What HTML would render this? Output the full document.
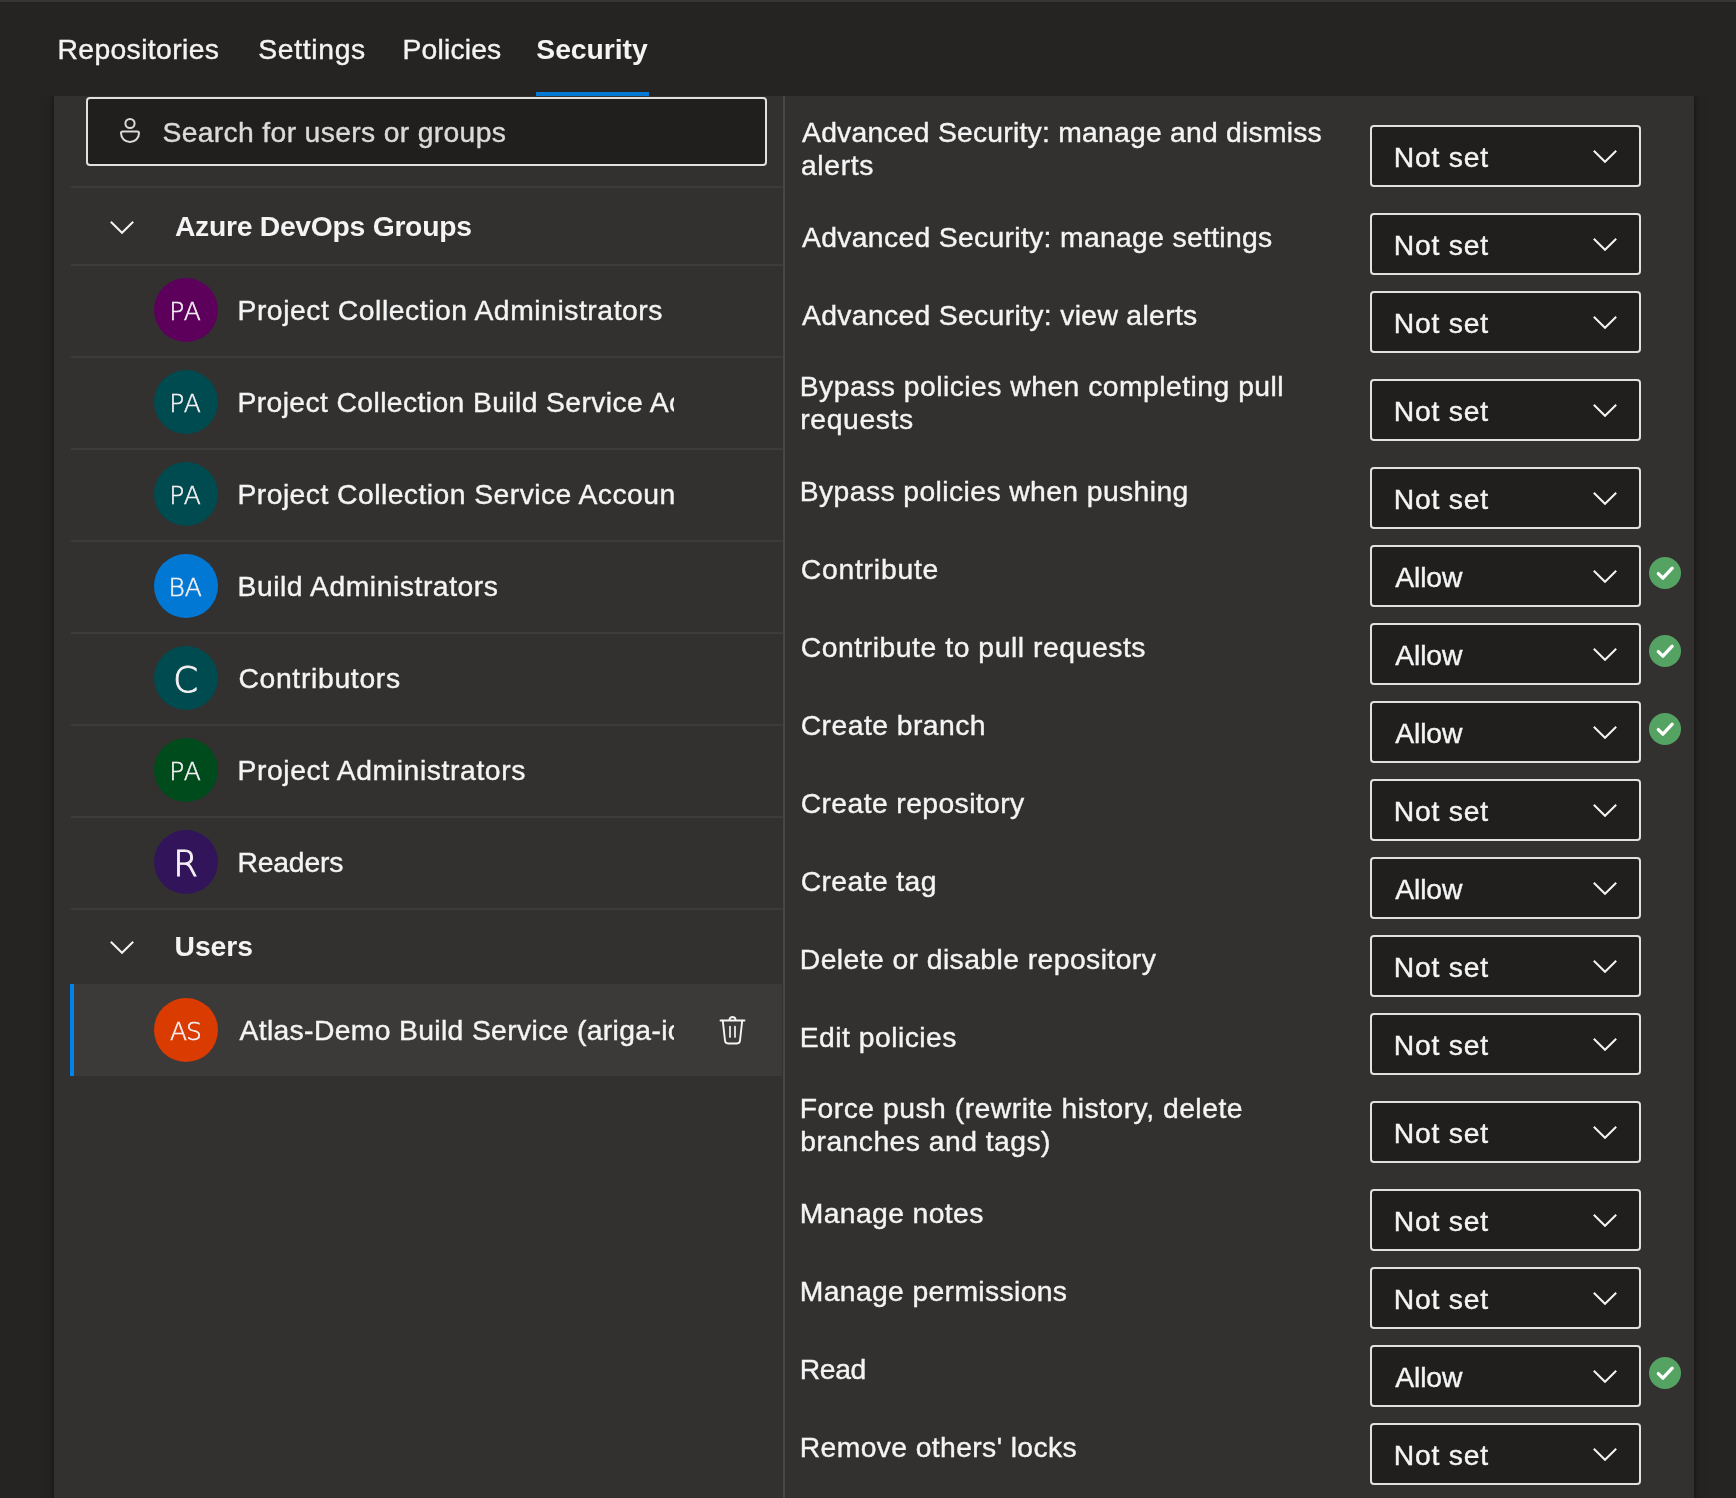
<!DOCTYPE html><html lang="en"><head><meta charset="utf-8"><title>Security</title><style>
*{box-sizing:border-box;margin:0;padding:0}
html,body{width:1736px;height:1498px;overflow:hidden;background:#252423}
body{font-family:"Liberation Sans",sans-serif;position:relative;color:#fff;-webkit-font-smoothing:antialiased}
.t{position:absolute;white-space:nowrap;-webkit-text-stroke:0.4px currentColor}
#root{position:absolute;left:0;top:0;width:1736px;height:1498px;overflow:hidden;will-change:transform;transform:translateZ(0)}
.abs{position:absolute}
.topstrip{left:0;top:0;width:1736px;height:2px;background:#383634}
.clip{left:0;top:96px;width:1736px;height:1402px;overflow:hidden}
.card{left:54px;top:0;width:1640px;height:1420px;background:#323130;box-shadow:0 0 3px 1px rgba(0,0,0,.28),0 0 13px 1px rgba(0,0,0,.22)}
.vdiv{left:783px;top:96px;width:2px;height:1402px;background:#484644}
.search{left:86px;top:97px;width:681px;height:69px;border:2px solid #e1e1e1;border-radius:4px;background:#201f1e}
.sep{left:71px;width:712px;height:2px;background:#3d3c3a}
.sel{left:70px;top:984px;width:712px;height:92px;background:#3b3a39}
.selbar{left:70px;top:984px;width:4px;height:92px;background:#0084ec}
.av{width:64px;height:64px;border-radius:50%;left:154px}
.avt{position:absolute;left:0;top:0;width:64px;height:64px;text-align:center;color:#f4f0f4;font-family:"DejaVu Sans","Liberation Sans",sans-serif;font-weight:200;-webkit-text-stroke:0.55px #f4f0f4}
.dd{left:1370px;width:271px;height:62px;border:2px solid #e1e1e1;border-radius:4px;background:#201f1e}
.underline{left:536px;top:92px;width:113px;height:4px;background:#0078d4}
svg{position:absolute;overflow:visible}
</style></head><body><div id="root">
<div class="abs topstrip"></div>
<div class="t " style="left:57.48px;top:33px;font-size:28.3px;line-height:32px;letter-spacing:0.377px;color:#f4f4f4;">Repositories</div>
<div class="t " style="left:258.33px;top:33px;font-size:28.3px;line-height:32px;letter-spacing:0.662px;color:#f4f4f4;">Settings</div>
<div class="t " style="left:402.58px;top:33px;font-size:28.3px;line-height:32px;letter-spacing:0.160px;color:#f4f4f4;">Policies</div>
<div class="t " style="left:536.31px;top:33px;font-size:28.3px;line-height:32px;letter-spacing:-0.035px;color:#f4f4f4;font-weight:700;-webkit-text-stroke-width:0;">Security</div>
<div class="abs clip"><div class="abs card"></div></div>
<div class="abs underline"></div>
<div class="abs vdiv"></div>
<div class="abs search"></div>
<svg style="left:119px;top:117px" width="22" height="27" viewBox="0 0 22 27" fill="none" stroke="#dadada" stroke-width="2"><circle cx="11" cy="6.5" r="4.6"/><path d="M3.6 14.5 H18.4 Q20 14.5 20 16.1 C20 21.5 16 25 11 25 C6 25 2 21.5 2 16.1 Q2 14.5 3.6 14.5 Z"/></svg>
<div class="t " style="left:162.53px;top:116px;font-size:28.3px;line-height:32px;letter-spacing:0.334px;color:#dadada;">Search for users or groups</div>
<div class="abs sep" style="top:186px"></div>
<div class="abs sep" style="top:264px"></div>
<div class="abs sep" style="top:356px"></div>
<div class="abs sep" style="top:448px"></div>
<div class="abs sep" style="top:540px"></div>
<div class="abs sep" style="top:632px"></div>
<div class="abs sep" style="top:724px"></div>
<div class="abs sep" style="top:816px"></div>
<div class="abs sep" style="top:908px"></div>
<div class="abs sel"></div><div class="abs selbar"></div>
<svg style="left:110.0px;top:220.5px" width="24" height="13" viewBox="0 0 24 13" fill="none" stroke="#f4f4f4" stroke-width="2.0"><path d="M0.8 0.8 L12.0 11.8 L23.2 0.8"/></svg>
<div class="t " style="left:174.92px;top:210px;font-size:28.3px;line-height:32px;letter-spacing:-0.273px;color:#f4f4f4;font-weight:700;-webkit-text-stroke-width:0;">Azure DevOps Groups</div>
<svg style="left:110.0px;top:940.5px" width="24" height="13" viewBox="0 0 24 13" fill="none" stroke="#f4f4f4" stroke-width="2.0"><path d="M0.8 0.8 L12.0 11.8 L23.2 0.8"/></svg>
<div class="t " style="left:174.50px;top:930px;font-size:28.3px;line-height:32px;letter-spacing:-0.033px;color:#f4f4f4;font-weight:700;-webkit-text-stroke-width:0;">Users</div>
<div class="abs av" style="top:278px;background:#5c005c"><div class="avt" style="font-size:25px;line-height:64px;top:1.5px;-webkit-text-stroke-width:0.55px;letter-spacing:1.0px;padding-left:1.0px;text-indent:0px;left:-1px">PA</div></div>
<div class="t " style="left:237.48px;top:294px;font-size:28.3px;line-height:32px;letter-spacing:0.552px;color:#f4f4f4;">Project Collection Administrators</div>
<div class="abs av" style="top:370px;background:#004b50"><div class="avt" style="font-size:25px;line-height:64px;top:1.5px;-webkit-text-stroke-width:0.55px;letter-spacing:1.0px;padding-left:1.0px;text-indent:0px;left:-1px">PA</div></div>
<div class="abs" style="left:230px;top:383px;width:444px;height:44px;overflow:hidden"><div class="t " style="left:7.48px;top:3px;font-size:28.3px;line-height:32px;letter-spacing:0.390px;color:#f4f4f4;">Project Collection Build Service Accounts</div></div>
<div class="abs av" style="top:462px;background:#004b50"><div class="avt" style="font-size:25px;line-height:64px;top:1.5px;-webkit-text-stroke-width:0.55px;letter-spacing:1.0px;padding-left:1.0px;text-indent:0px;left:-1px">PA</div></div>
<div class="abs" style="left:230px;top:475px;width:444px;height:44px;overflow:hidden"><div class="t " style="left:7.48px;top:3px;font-size:28.3px;line-height:32px;letter-spacing:0.458px;color:#f4f4f4;">Project Collection Service Accounts</div></div>
<div class="abs av" style="top:554px;background:#0078d4"><div class="avt" style="font-size:25px;line-height:64px;top:1.5px;-webkit-text-stroke-width:0.55px;letter-spacing:-0.2px;padding-left:0px;text-indent:0.2px;left:-1px">BA</div></div>
<div class="t " style="left:237.48px;top:570px;font-size:28.3px;line-height:32px;letter-spacing:0.550px;color:#f4f4f4;">Build Administrators</div>
<div class="abs av" style="top:646px;background:#004b50"><div class="avt" style="font-size:35.5px;line-height:64px;top:1.8px;-webkit-text-stroke-width:0.95px;letter-spacing:0px;padding-left:0px;text-indent:0px;left:-0.4px">C</div></div>
<div class="t " style="left:238.38px;top:662px;font-size:28.3px;line-height:32px;letter-spacing:0.690px;color:#f4f4f4;">Contributors</div>
<div class="abs av" style="top:738px;background:#004b1c"><div class="avt" style="font-size:25px;line-height:64px;top:1.5px;-webkit-text-stroke-width:0.55px;letter-spacing:1.0px;padding-left:1.0px;text-indent:0px;left:-1px">PA</div></div>
<div class="t " style="left:237.48px;top:754px;font-size:28.3px;line-height:32px;letter-spacing:0.605px;color:#f4f4f4;">Project Administrators</div>
<div class="abs av" style="top:830px;background:#32145a"><div class="avt" style="font-size:35.5px;line-height:64px;top:1.8px;-webkit-text-stroke-width:0.95px;letter-spacing:0px;padding-left:0px;text-indent:0px;left:-0.4px">R</div></div>
<div class="t " style="left:237.48px;top:846px;font-size:28.3px;line-height:32px;letter-spacing:-0.172px;color:#f4f4f4;">Readers</div>
<div class="abs av" style="top:998px;background:#da3b01"><div class="avt" style="font-size:25px;line-height:64px;top:1.5px;-webkit-text-stroke-width:0.55px;letter-spacing:-1.0px;padding-left:0px;text-indent:1.0px;left:-1px">AS</div></div>
<div class="abs" style="left:230px;top:1011px;width:444px;height:44px;overflow:hidden"><div class="t " style="left:9.44px;top:3px;font-size:28.3px;line-height:32px;letter-spacing:0.353px;color:#f4f4f4;">Atlas-Demo Build Service (ariga-io)</div></div>
<svg style="left:719px;top:1015px" width="27" height="30" viewBox="0 0 27 30" fill="none" stroke="#f4f4f4" stroke-width="1.9" stroke-linecap="round" stroke-linejoin="round"><path d="M1.5 5.5 H25.5"/><path d="M10.5 5 C10.5 1 16.5 1 16.5 5"/><path d="M3.8 5.8 L6 25.5 C6.2 27.5 7.5 28.5 9 28.5 H18 C19.5 28.5 20.8 27.5 21 25.5 L23.2 5.8"/><path d="M11 11.5 V22 M16 11.5 V22" stroke-width="1.7"/></svg>
<div class="t " style="left:802.04px;top:116px;font-size:28.3px;line-height:32px;letter-spacing:0.237px;color:#f4f4f4;">Advanced Security: manage and dismiss</div>
<div class="t " style="left:800.91px;top:149px;font-size:28.3px;line-height:32px;letter-spacing:0.661px;color:#f4f4f4;">alerts</div>
<div class="abs dd" style="top:125px"></div>
<div class="t " style="left:1393.78px;top:141px;font-size:28.3px;line-height:32px;letter-spacing:0.793px;color:#f4f4f4;">Not set</div>
<svg style="left:1593.0px;top:149.9px" width="24" height="13" viewBox="0 0 24 13" fill="none" stroke="#f4f4f4" stroke-width="2.0"><path d="M0.8 0.8 L12.0 11.8 L23.2 0.8"/></svg>
<div class="t " style="left:802.04px;top:221px;font-size:28.3px;line-height:32px;letter-spacing:0.331px;color:#f4f4f4;">Advanced Security: manage settings</div>
<div class="abs dd" style="top:213px"></div>
<div class="t " style="left:1393.78px;top:229px;font-size:28.3px;line-height:32px;letter-spacing:0.793px;color:#f4f4f4;">Not set</div>
<svg style="left:1593.0px;top:237.9px" width="24" height="13" viewBox="0 0 24 13" fill="none" stroke="#f4f4f4" stroke-width="2.0"><path d="M0.8 0.8 L12.0 11.8 L23.2 0.8"/></svg>
<div class="t " style="left:802.04px;top:299px;font-size:28.3px;line-height:32px;letter-spacing:0.342px;color:#f4f4f4;">Advanced Security: view alerts</div>
<div class="abs dd" style="top:291px"></div>
<div class="t " style="left:1393.78px;top:307px;font-size:28.3px;line-height:32px;letter-spacing:0.793px;color:#f4f4f4;">Not set</div>
<svg style="left:1593.0px;top:315.9px" width="24" height="13" viewBox="0 0 24 13" fill="none" stroke="#f4f4f4" stroke-width="2.0"><path d="M0.8 0.8 L12.0 11.8 L23.2 0.8"/></svg>
<div class="t " style="left:799.78px;top:370px;font-size:28.3px;line-height:32px;letter-spacing:0.477px;color:#f4f4f4;">Bypass policies when completing pull</div>
<div class="t " style="left:800.23px;top:403px;font-size:28.3px;line-height:32px;letter-spacing:0.635px;color:#f4f4f4;">requests</div>
<div class="abs dd" style="top:379px"></div>
<div class="t " style="left:1393.78px;top:395px;font-size:28.3px;line-height:32px;letter-spacing:0.793px;color:#f4f4f4;">Not set</div>
<svg style="left:1593.0px;top:403.9px" width="24" height="13" viewBox="0 0 24 13" fill="none" stroke="#f4f4f4" stroke-width="2.0"><path d="M0.8 0.8 L12.0 11.8 L23.2 0.8"/></svg>
<div class="t " style="left:799.78px;top:475px;font-size:28.3px;line-height:32px;letter-spacing:0.410px;color:#f4f4f4;">Bypass policies when pushing</div>
<div class="abs dd" style="top:467px"></div>
<div class="t " style="left:1393.78px;top:483px;font-size:28.3px;line-height:32px;letter-spacing:0.793px;color:#f4f4f4;">Not set</div>
<svg style="left:1593.0px;top:491.9px" width="24" height="13" viewBox="0 0 24 13" fill="none" stroke="#f4f4f4" stroke-width="2.0"><path d="M0.8 0.8 L12.0 11.8 L23.2 0.8"/></svg>
<div class="t " style="left:800.69px;top:553px;font-size:28.3px;line-height:32px;letter-spacing:0.788px;color:#f4f4f4;">Contribute</div>
<div class="abs dd" style="top:545px"></div>
<div class="t " style="left:1395.34px;top:561px;font-size:28.3px;line-height:32px;letter-spacing:-0.152px;color:#f4f4f4;">Allow</div>
<svg style="left:1593.0px;top:569.9px" width="24" height="13" viewBox="0 0 24 13" fill="none" stroke="#f4f4f4" stroke-width="2.0"><path d="M0.8 0.8 L12.0 11.8 L23.2 0.8"/></svg>
<svg style="left:1649px;top:557px" width="32" height="32" viewBox="0 0 32 32"><circle cx="16" cy="16" r="16" fill="#55a362"/><path d="M9.3 16.6 L13.9 21.2 L23.2 11.2" fill="none" stroke="#fff" stroke-width="3.3" stroke-linecap="round" stroke-linejoin="round"/></svg>
<div class="t " style="left:800.69px;top:631px;font-size:28.3px;line-height:32px;letter-spacing:0.557px;color:#f4f4f4;">Contribute to pull requests</div>
<div class="abs dd" style="top:623px"></div>
<div class="t " style="left:1395.34px;top:639px;font-size:28.3px;line-height:32px;letter-spacing:-0.152px;color:#f4f4f4;">Allow</div>
<svg style="left:1593.0px;top:647.9px" width="24" height="13" viewBox="0 0 24 13" fill="none" stroke="#f4f4f4" stroke-width="2.0"><path d="M0.8 0.8 L12.0 11.8 L23.2 0.8"/></svg>
<svg style="left:1649px;top:635px" width="32" height="32" viewBox="0 0 32 32"><circle cx="16" cy="16" r="16" fill="#55a362"/><path d="M9.3 16.6 L13.9 21.2 L23.2 11.2" fill="none" stroke="#fff" stroke-width="3.3" stroke-linecap="round" stroke-linejoin="round"/></svg>
<div class="t " style="left:800.69px;top:709px;font-size:28.3px;line-height:32px;letter-spacing:0.466px;color:#f4f4f4;">Create branch</div>
<div class="abs dd" style="top:701px"></div>
<div class="t " style="left:1395.34px;top:717px;font-size:28.3px;line-height:32px;letter-spacing:-0.152px;color:#f4f4f4;">Allow</div>
<svg style="left:1593.0px;top:725.9px" width="24" height="13" viewBox="0 0 24 13" fill="none" stroke="#f4f4f4" stroke-width="2.0"><path d="M0.8 0.8 L12.0 11.8 L23.2 0.8"/></svg>
<svg style="left:1649px;top:713px" width="32" height="32" viewBox="0 0 32 32"><circle cx="16" cy="16" r="16" fill="#55a362"/><path d="M9.3 16.6 L13.9 21.2 L23.2 11.2" fill="none" stroke="#fff" stroke-width="3.3" stroke-linecap="round" stroke-linejoin="round"/></svg>
<div class="t " style="left:800.69px;top:787px;font-size:28.3px;line-height:32px;letter-spacing:0.407px;color:#f4f4f4;">Create repository</div>
<div class="abs dd" style="top:779px"></div>
<div class="t " style="left:1393.78px;top:795px;font-size:28.3px;line-height:32px;letter-spacing:0.793px;color:#f4f4f4;">Not set</div>
<svg style="left:1593.0px;top:803.9px" width="24" height="13" viewBox="0 0 24 13" fill="none" stroke="#f4f4f4" stroke-width="2.0"><path d="M0.8 0.8 L12.0 11.8 L23.2 0.8"/></svg>
<div class="t " style="left:800.69px;top:865px;font-size:28.3px;line-height:32px;letter-spacing:0.409px;color:#f4f4f4;">Create tag</div>
<div class="abs dd" style="top:857px"></div>
<div class="t " style="left:1395.34px;top:873px;font-size:28.3px;line-height:32px;letter-spacing:-0.152px;color:#f4f4f4;">Allow</div>
<svg style="left:1593.0px;top:881.9px" width="24" height="13" viewBox="0 0 24 13" fill="none" stroke="#f4f4f4" stroke-width="2.0"><path d="M0.8 0.8 L12.0 11.8 L23.2 0.8"/></svg>
<div class="t " style="left:799.78px;top:943px;font-size:28.3px;line-height:32px;letter-spacing:0.429px;color:#f4f4f4;">Delete or disable repository</div>
<div class="abs dd" style="top:935px"></div>
<div class="t " style="left:1393.78px;top:951px;font-size:28.3px;line-height:32px;letter-spacing:0.793px;color:#f4f4f4;">Not set</div>
<svg style="left:1593.0px;top:959.9px" width="24" height="13" viewBox="0 0 24 13" fill="none" stroke="#f4f4f4" stroke-width="2.0"><path d="M0.8 0.8 L12.0 11.8 L23.2 0.8"/></svg>
<div class="t " style="left:799.78px;top:1021px;font-size:28.3px;line-height:32px;letter-spacing:0.469px;color:#f4f4f4;">Edit policies</div>
<div class="abs dd" style="top:1013px"></div>
<div class="t " style="left:1393.78px;top:1029px;font-size:28.3px;line-height:32px;letter-spacing:0.793px;color:#f4f4f4;">Not set</div>
<svg style="left:1593.0px;top:1037.9px" width="24" height="13" viewBox="0 0 24 13" fill="none" stroke="#f4f4f4" stroke-width="2.0"><path d="M0.8 0.8 L12.0 11.8 L23.2 0.8"/></svg>
<div class="t " style="left:799.78px;top:1092px;font-size:28.3px;line-height:32px;letter-spacing:0.502px;color:#f4f4f4;">Force push (rewrite history, delete</div>
<div class="t " style="left:800.29px;top:1125px;font-size:28.3px;line-height:32px;letter-spacing:0.470px;color:#f4f4f4;">branches and tags)</div>
<div class="abs dd" style="top:1101px"></div>
<div class="t " style="left:1393.78px;top:1117px;font-size:28.3px;line-height:32px;letter-spacing:0.793px;color:#f4f4f4;">Not set</div>
<svg style="left:1593.0px;top:1125.9px" width="24" height="13" viewBox="0 0 24 13" fill="none" stroke="#f4f4f4" stroke-width="2.0"><path d="M0.8 0.8 L12.0 11.8 L23.2 0.8"/></svg>
<div class="t " style="left:799.78px;top:1197px;font-size:28.3px;line-height:32px;letter-spacing:0.389px;color:#f4f4f4;">Manage notes</div>
<div class="abs dd" style="top:1189px"></div>
<div class="t " style="left:1393.78px;top:1205px;font-size:28.3px;line-height:32px;letter-spacing:0.793px;color:#f4f4f4;">Not set</div>
<svg style="left:1593.0px;top:1213.9px" width="24" height="13" viewBox="0 0 24 13" fill="none" stroke="#f4f4f4" stroke-width="2.0"><path d="M0.8 0.8 L12.0 11.8 L23.2 0.8"/></svg>
<div class="t " style="left:799.78px;top:1275px;font-size:28.3px;line-height:32px;letter-spacing:0.360px;color:#f4f4f4;">Manage permissions</div>
<div class="abs dd" style="top:1267px"></div>
<div class="t " style="left:1393.78px;top:1283px;font-size:28.3px;line-height:32px;letter-spacing:0.793px;color:#f4f4f4;">Not set</div>
<svg style="left:1593.0px;top:1291.9px" width="24" height="13" viewBox="0 0 24 13" fill="none" stroke="#f4f4f4" stroke-width="2.0"><path d="M0.8 0.8 L12.0 11.8 L23.2 0.8"/></svg>
<div class="t " style="left:799.78px;top:1353px;font-size:28.3px;line-height:32px;letter-spacing:-0.373px;color:#f4f4f4;">Read</div>
<div class="abs dd" style="top:1345px"></div>
<div class="t " style="left:1395.34px;top:1361px;font-size:28.3px;line-height:32px;letter-spacing:-0.152px;color:#f4f4f4;">Allow</div>
<svg style="left:1593.0px;top:1369.9px" width="24" height="13" viewBox="0 0 24 13" fill="none" stroke="#f4f4f4" stroke-width="2.0"><path d="M0.8 0.8 L12.0 11.8 L23.2 0.8"/></svg>
<svg style="left:1649px;top:1357px" width="32" height="32" viewBox="0 0 32 32"><circle cx="16" cy="16" r="16" fill="#55a362"/><path d="M9.3 16.6 L13.9 21.2 L23.2 11.2" fill="none" stroke="#fff" stroke-width="3.3" stroke-linecap="round" stroke-linejoin="round"/></svg>
<div class="t " style="left:799.78px;top:1431px;font-size:28.3px;line-height:32px;letter-spacing:0.384px;color:#f4f4f4;">Remove others' locks</div>
<div class="abs dd" style="top:1423px"></div>
<div class="t " style="left:1393.78px;top:1439px;font-size:28.3px;line-height:32px;letter-spacing:0.793px;color:#f4f4f4;">Not set</div>
<svg style="left:1593.0px;top:1447.9px" width="24" height="13" viewBox="0 0 24 13" fill="none" stroke="#f4f4f4" stroke-width="2.0"><path d="M0.8 0.8 L12.0 11.8 L23.2 0.8"/></svg>
</div></body></html>
